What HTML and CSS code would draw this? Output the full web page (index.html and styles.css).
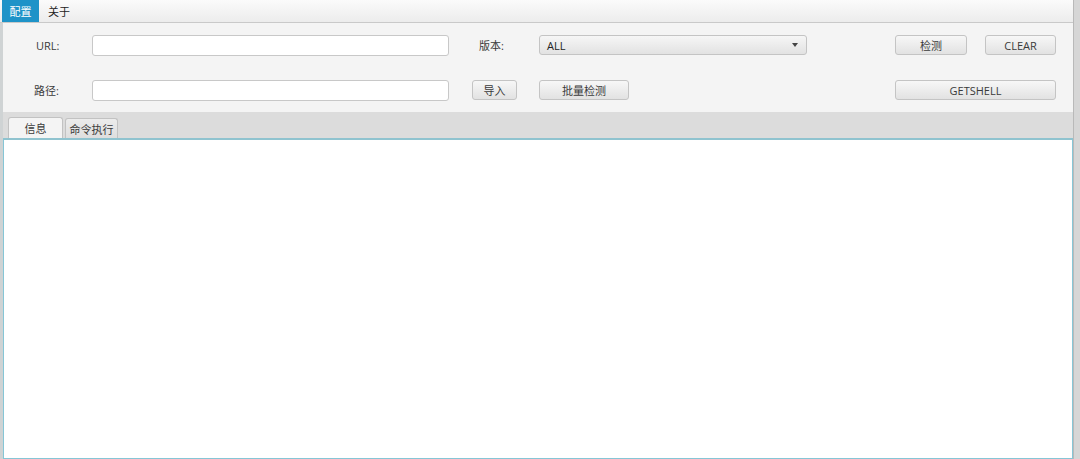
FILE: index.html
```html
<!DOCTYPE html>
<html lang="zh">
<head>
<meta charset="utf-8">
<link rel="stylesheet" href="styles.css">
</head>
<body>
<div class="window">
  <div class="edge-left"></div>
  <div class="main">
    <div class="menubar">
      <div class="menu active">配置</div>
      <div class="menu">关于</div>
    </div>
    <div class="form">
      <div class="row row1">
        <span class="label lbl-url">URL:</span>
        <div class="input"></div>
        <span class="label lbl-ver">版本:</span>
        <div class="combo"><span>ALL</span><span class="arrow"></span></div>
        <div class="btn btn-check">检测</div>
        <div class="btn btn-clear">CLEAR</div>
      </div>
      <div class="row row2">
        <span class="label lbl-path">路径:</span>
        <div class="input"></div>
        <div class="btn btn-import">导入</div>
        <div class="btn btn-batch">批量检测</div>
        <div class="btn btn-shell">GETSHELL</div>
      </div>
    </div>
    <div class="tabs">
      <div class="tab selected">信息</div>
      <div class="tab">命令执行</div>
    </div>
    <div class="content"></div>
  </div>
  <div class="edge-right"></div>
</div>
</body>
</html>
```
FILE: styles.css
```css
* { box-sizing: border-box; }
html, body { margin: 0; padding: 0; }
body {
  width: 1080px;
  height: 459px;
  overflow: hidden;
  font-family: "Open Sans", "Noto Sans CJK SC", sans-serif;
  font-size: 11px;
  color: #3a3a3a;
  background: #f4f4f4;
  white-space: nowrap;
}
.window { display: flex; height: 459px; }
.edge-left { width: 3px; background: #cfd3d4; }
.edge-right { width: 7px; background: #d6d6d6; border-left: 1px solid #b9b9b9; }
.main { flex: 1; display: flex; flex-direction: column; min-width: 0; }

.menubar {
  height: 23px;
  display: flex;
  align-items: stretch;
  background: linear-gradient(#fbfbfb, #ececec);
  border-bottom: 1px solid #c9c9c9;
  margin-left: -3px;
  padding-left: 2px;
}
.menu {
  padding: 0 9px;
  display: flex;
  align-items: center;
  height: 22px;
  color: #222;
}
.menu.active { background: #1e93c8; color: #fff; width: 37px; padding: 0; justify-content: center; margin-right: 0; }

.form { height: 89px; background: #f4f4f4; display: flex; flex-direction: column; }
.row { display: flex; align-items: center; height: 20px; }
.row1 { margin-top: 12px; }
.row2 { margin-top: 25px; }
.label { color: #3a3a3a; }
.lbl-url { margin-left: 33px; width: 56px; }
.lbl-path { margin-left: 31px; width: 58px; }
.lbl-ver { margin-left: 30px; width: 60px; }
.input {
  width: 357px; height: 21px;
  background: #fff;
  border: 1px solid #c8c8c8;
  border-radius: 3px;
}
.combo {
  width: 268px; height: 20px;
  border: 1px solid #c4c4c4;
  border-radius: 3px;
  background: linear-gradient(#f6f6f6, #e2e2e2);
  display: flex; align-items: center; justify-content: space-between;
  padding: 0 8px 0 7px;
  color: #222;
}
.arrow {
  width: 0; height: 0;
  border-left: 3.5px solid transparent;
  border-right: 3.5px solid transparent;
  border-top: 4px solid #444;
}
.btn {
  height: 20px;
  border: 1px solid #c4c4c4;
  border-radius: 3px;
  background: linear-gradient(#f7f7f7, #e2e2e2);
  display: flex; align-items: center; justify-content: center;
  color: #3a3a3a;
}
.btn-check { width: 72px; margin-left: 88px; }
.btn-clear { width: 71px; margin-left: 18px; }
.btn-import { width: 45px; margin-left: 23px; }
.btn-batch { width: 90px; margin-left: 22px; }
.btn-shell { width: 161px; margin-left: 266px; }

.tabs {
  height: 26px;
  background: #dcdcdc;
  display: flex; align-items: flex-end;
  padding-left: 5px;
  gap: 2px;
}
.tab {
  height: 21px;
  padding: 0;
  display: flex; align-items: center; justify-content: center;
  border: 1px solid #c2c2c2;
  border-bottom: none;
  border-radius: 3px 3px 0 0;
  background: linear-gradient(#ececec, #dedede);
  color: #3a3a3a;
}
.tab.selected { width: 55px; background: #f4f4f4; }
.tab:not(.selected) { width: 53px; height: 20px; }
.content {
  flex: 1;
  background: #fff;
  border: 1px solid #86c6d6;
  border-top: 2px solid #8fc3cf;
}
```
